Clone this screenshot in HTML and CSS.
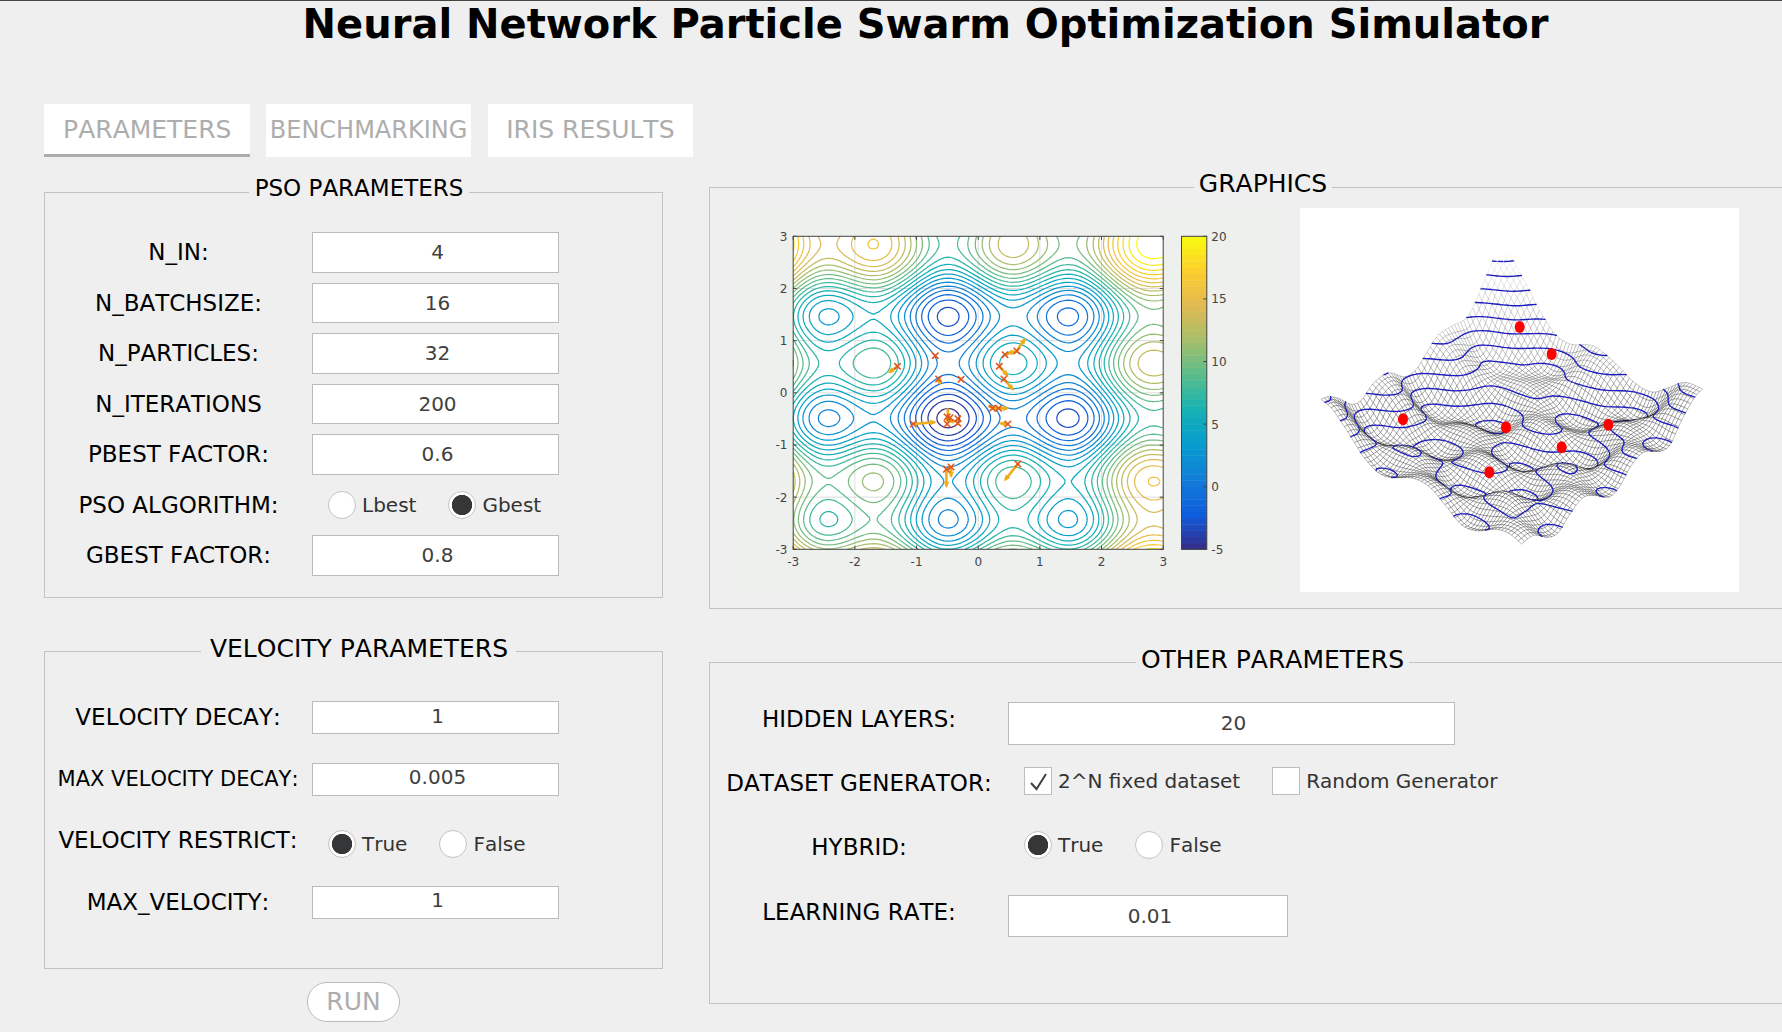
FILE: index.html
```html
<!DOCTYPE html>
<html lang="en">
<head>
<meta charset="utf-8">
<title>Neural Network Particle Swarm Optimization Simulator</title>
<link rel="stylesheet" href="styles.css">
</head>
<body>
<h1 class="title">Neural Network Particle Swarm Optimization Simulator</h1>
<div class="columns">
  <div class="left">
    <nav class="tabs">
      <button class="tab tab-active">PARAMETERS</button>
      <button class="tab tab-small">BENCHMARKING</button>
      <button class="tab">IRIS RESULTS</button>
    </nav>
    <section class="panel pso">
      <h2 class="legend legend-pso">PSO PARAMETERS</h2>
      <div class="rows">
        <div class="row"><label class="label">N_IN:</label><div class="field">4</div></div>
        <div class="row"><label class="label">N_BATCHSIZE:</label><div class="field">16</div></div>
        <div class="row"><label class="label">N_PARTICLES:</label><div class="field">32</div></div>
        <div class="row"><label class="label">N_ITERATIONS</label><div class="field">200</div></div>
        <div class="row"><label class="label">PBEST FACTOR:</label><div class="field">0.6</div></div>
        <div class="row"><label class="label">PSO ALGORITHM:</label><div class="options"><span class="radio"></span><span class="option">Lbest</span><span class="radio radio-on"></span><span class="option">Gbest</span></div></div>
        <div class="row"><label class="label">GBEST FACTOR:</label><div class="field">0.8</div></div>
      </div>
    </section>
    <section class="panel velocity">
      <h2 class="legend legend-velocity">VELOCITY PARAMETERS</h2>
      <div class="rows">
        <div class="row"><label class="label">VELOCITY DECAY:</label><div class="field">1</div></div>
        <div class="row"><label class="label label-tight">MAX VELOCITY DECAY:</label><div class="field">0.005</div></div>
        <div class="row"><label class="label">VELOCITY RESTRICT:</label><div class="options"><span class="radio radio-on"></span><span class="option">True</span><span class="radio"></span><span class="option">False</span></div></div>
        <div class="row"><label class="label">MAX_VELOCITY:</label><div class="field">1</div></div>
      </div>
    </section>
    <button class="run">RUN</button>
  </div>
  <div class="right">
    <section class="panel graphics">
      <h2 class="legend legend-graphics">GRAPHICS</h2>
      <div class="plots">
        <svg class="contour" id="contour" viewBox="730 208 548 384" width="548" height="384"></svg>
        <svg class="surface" id="surface" viewBox="60 54 1317 1152" width="439" height="384"></svg>
      </div>
    </section>
    <section class="panel other">
      <h2 class="legend legend-other">OTHER PARAMETERS</h2>
      <div class="rows">
        <div class="row"><label class="label">HIDDEN LAYERS:</label><div class="field field-wide">20</div></div>
        <div class="row"><label class="label">DATASET GENERATOR:</label><div class="options options-up"><span class="check"><svg width="26" height="26" viewBox="0 0 26 26"><path class="tick" d="M6 15 L11.5 21 L21 6"/></svg></span><span class="option">2^N fixed dataset</span><span class="check"></span><span class="option">Random Generator</span></div></div>
        <div class="row"><label class="label">HYBRID:</label><div class="options options-up"><span class="radio radio-on"></span><span class="option">True</span><span class="radio"></span><span class="option">False</span></div></div>
        <div class="row"><label class="label">LEARNING RATE:</label><div class="field field-rate">0.01</div></div>
      </div>
    </section>
  </div>
</div>
<script src="plots.js"></script>
</body>
</html>
```
FILE: styles.css
```css
* { box-sizing: border-box; }
body {
  margin: 0;
  width: 1782px;
  height: 1032px;
  overflow: hidden;
  background: #efefef;
  border-top: 1px solid #444;
  font-family: "DejaVu Sans", sans-serif;
  font-kerning: none;
  color: #000;
}
h1, h2 { margin: 0; }
button { font-family: inherit; font-kerning: none; padding: 0; }
.title {
  height: 103px;
  padding-left: 69px;
  text-align: center;
  font-size: 40px;
  line-height: 47px;
  font-kerning: normal;
  white-space: nowrap;
}
.columns { display: flex; gap: 46px; padding-left: 44px; }
.left { width: 619px; flex: none; }
.right { width: 1120px; flex: none; padding-top: 83px; }
.tabs { display: flex; gap: 16.3px; width: 660px; height: 53px; margin-bottom: 35px; }
.tab {
  width: 205.5px;
  height: 53px;
  border: 0;
  background: #fff;
  color: #adadad;
  font-size: 25px;
  white-space: nowrap;
  padding-bottom: 2px;
}
.tab-active { border-bottom: 3px solid #adadad; padding: 1px 0 0 1px; }
.tab-small { font-size: 24px; }
.panel { border: 1px solid #c3c3c3; display: flex; flex-direction: column; }
.legend {
  height: 30px;
  line-height: 30px;
  background: #efefef;
  font-weight: 400;
  font-size: 25px;
  text-align: center;
  white-space: nowrap;
  flex: none;
}
.pso { height: 406px; }
.legend-pso { width: 220px; margin: -20px 0 29px 204px; font-size: 23px; }
.velocity { height: 318px; margin-top: 53px; }
.legend-velocity { width: 315px; margin: -18px 0 37px 156px; padding-left: 1px; }
.rows { display: flex; flex-direction: column; }
.pso .rows { gap: 10px; }
.pso .row { height: 40.5px; }
.velocity .rows { gap: 29.6px; }
.velocity .row { height: 32px; }
.row { display: grid; grid-template-columns: 267px auto; align-items: center; }
.label { font-size: 23px; line-height: 28px; text-align: center; white-space: nowrap; }
.label-tight { font-size: 21px; }
.field {
  width: 247px;
  height: 100%;
  display: flex;
  align-items: center;
  justify-content: center;
  padding-left: 4px;
  background: #fff;
  border: 1px solid #bbb;
  font-size: 20px;
  color: #404040;
}
.velocity .field { padding-bottom: 4px; }
.options { display: flex; align-items: center; padding-left: 16px; }
.velocity .label, .velocity .options { align-self: start; }
.velocity .label { line-height: 33px; padding-right: 1px; }
.velocity .options { padding-top: 6px; }
.radio, .check { width: 28px; height: 28px; flex: none; background: #fff; border: 1px solid #bdbdbd; }
.radio { border-radius: 50%; border-color: #c4c4c4; }
.radio-on { background: radial-gradient(circle, #353637 0 9.8px, #fff 10.5px); }
.check svg { display: block; }
.tick { fill: none; stroke: #404040; stroke-width: 2; }
.option { font-size: 20px; line-height: 26px; color: #333; margin: 0 32px 0 6px; white-space: nowrap; }
.run {
  display: block;
  width: 93px;
  height: 40px;
  margin: 13px 0 0 263px;
  padding-bottom: 2px;
  border: 1px solid #bbb;
  border-radius: 20px;
  background: #fff;
  color: #adadad;
  font-size: 25px;
}
.graphics { height: 422px; }
.legend-graphics { width: 138px; margin: -19px 0 9px 484px; line-height: 30px; }
.plots { display: flex; gap: 22px; padding-left: 20px; }
.contour { background: #eef0ed; flex: none; }
.surface { background: #fff; flex: none; }
.other { height: 342px; margin-top: 53px; }
.legend-other { width: 273px; margin: -18px 0 24px 426px; }
.other .rows { gap: 21.2px; }
.other .row { height: 43px; grid-template-columns: 298px auto; align-items: start; }
.other .label { padding-top: 6px; line-height: 28px; }
.other .field { margin-top: 3px; }
.other .field-wide { width: 447px; height: 43px; padding-bottom: 1px; }
.other .field-rate { width: 280px; height: 42px; }
.options-up { padding-top: 4px; }
.box { fill: #fff; }
.tick-text { font-size: 12px; fill: #444; }
.grid-line { stroke: #ddd; stroke-width: 1; }
.level { fill: none; stroke-width: 1.25; }
.frame { fill: none; stroke: #444; stroke-width: 1; }
.arrow { stroke: #edae1c; stroke-width: 2.6; fill: none; }
.arrow-head { fill: #edae1c; }
.mark { stroke: #e0561b; stroke-width: 1.6; fill: none; }
.level-3d { stroke: #1d1dc0; stroke-width: 4; stroke-linecap: round; fill: none; }
.dot { fill: #f00; }
```
FILE: plots.js
```js
const join = (a) => a.join("");

// Contour plot of f(x, y) = g(x) + g(y) on [-3, 3] x [-3, 3]
(function () {
  const X0 = 793.2, X1 = 1163.2, Y0 = 236.3, Y1 = 549.3;
  const sx = (x) => X0 + (x + 3) / 6 * (X1 - X0);
  const sy = (y) => Y1 - (y + 3) / 6 * (Y1 - Y0);
  const g = (t) => t * t + 3 * Math.sin(3 * t);
  const stops = [[53,42,135],[15,92,221],[18,125,216],[7,156,207],[21,177,180],[89,189,140],[165,190,107],[225,185,82],[252,206,46],[249,251,14]];
  const colour = (t) => {
    const p = Math.max(0, Math.min(0.9999, t)) * 9, i = Math.floor(p), r = p - i;
    return "rgb(" + stops[i].map((c, k) => Math.round(c + (stops[i + 1][k] - c) * r)).join(",") + ")";
  };
  const out = [`<rect class="box" x="${X0}" y="${Y0}" width="${X1 - X0}" height="${Y1 - Y0}"/>`];
  for (let i = -2; i <= 2; i++) {
    out.push(`<path class="grid-line" d="M${sx(i)} ${Y0}V${Y1}M${X0} ${sy(i)}H${X1}"/>`);
  }
  const n = 110, step = 6 / n;
  for (let level = -5; level <= 20; level++) {
    let d = "";
    for (let i = 0; i < n; i++) for (let j = 0; j < n; j++) {
      const x = -3 + i * step, y = -3 + j * step;
      const c = [[x, y], [x + step, y], [x + step, y + step], [x, y + step]];
      const v = c.map((p) => g(p[0]) + g(p[1]) - level);
      const hit = [];
      for (let k = 0; k < 4; k++) {
        const m = (k + 1) % 4;
        if ((v[k] < 0) !== (v[m] < 0)) {
          const r = v[k] / (v[k] - v[m]);
          hit.push(sx(c[k][0] + (c[m][0] - c[k][0]) * r).toFixed(1) + " " + sy(c[k][1] + (c[m][1] - c[k][1]) * r).toFixed(1));
        }
      }
      for (let k = 0; k + 1 < hit.length; k += 2) d += "M" + hit[k] + "L" + hit[k + 1];
    }
    out.push(`<path class="level" stroke="${colour((level + 5) / 25)}" d="${d}"/>`);
  }
  out.push(`<rect class="frame" x="${X0}" y="${Y0}" width="${X1 - X0}" height="${Y1 - Y0}"/>`);
  for (let i = -3; i <= 3; i++) {
    out.push(`<path class="frame" d="M${sx(i)} ${Y1}v-3.5M${sx(i)} ${Y0}v3.5M${X0} ${sy(i)}h3.5M${X1} ${sy(i)}h-3.5"/>`);
    out.push(`<text class="tick-text" text-anchor="middle" x="${sx(i)}" y="566">${i}</text>`);
    out.push(`<text class="tick-text" text-anchor="end" x="787.5" y="${sy(i) + 4.5}">${i}</text>`);
  }
  const bands = 50, bh = (Y1 - Y0) / bands;
  for (let i = 0; i < bands; i++) {
    out.push(`<rect x="1181.5" width="25.3" y="${Y1 - (i + 1) * bh}" height="${bh + 0.4}" fill="${colour((i + 0.5) / bands)}"/>`);
  }
  out.push(`<rect class="frame" x="1181.5" y="${Y0}" width="25.3" height="${Y1 - Y0}"/>`);
  for (let v = -5; v <= 20; v += 5) {
    const y = Y1 - (v + 5) / 25 * (Y1 - Y0);
    out.push(`<path class="frame" d="M1206.8 ${y}h-3.5"/><text class="tick-text" x="1211.3" y="${y + 4.5}">${v}</text>`);
  }
  const px = (x) => 700 + x / 2.8, py = (y) => 160 + y / 3;
  const arrows = [[553,619,526,640],[668,657,673,677],[887,573,912,533],[854,584,887,573],[838,619,864,650],[851,657,879,692],[807,739,836,747],[819,745,866,745],[862,792,836,790],[597,792,663,786],[694,745,694,792],[690,928,690,985],[703,921,703,955],[890,912,851,964],[722,783,692,783],[731,658,724,650]];
  for (const a of arrows) {
    const x1 = px(a[0]), y1 = py(a[1]), x2 = px(a[2]), y2 = py(a[3]);
    const l = Math.hypot(x2 - x1, y2 - y1), ux = (x2 - x1) / l, uy = (y2 - y1) / l;
    out.push(`<path class="arrow" d="M${x1} ${y1}L${x2 - ux * 2} ${y2 - uy * 2}"/>`);
    if (l > 6) out.push(`<path class="arrow-head" d="M${x2} ${y2}L${x2 - ux * 6.5 - uy * 2.8} ${y2 - uy * 6.5 + ux * 2.8}L${x2 - ux * 6.5 + uy * 2.8} ${y2 - uy * 6.5 - ux * 2.8}Z"/>`);
  }
  const marks = [[553,619],[659,587],[668,657],[731,658],[854,584],[887,573],[838,619],[851,657],[819,745],[836,745],[862,792],[597,792],[692,771],[700,773],[722,776],[692,792],[722,790],[690,928],[703,921],[890,912]];
  for (const m of marks) {
    out.push(`<path class="mark" d="M${px(m[0]) - 3.2} ${py(m[1]) - 3.2}l6.4 6.4m0 -6.4l-6.4 6.4"/>`);
  }
  document.getElementById("contour").innerHTML = join(out);
})();

// Wireframe surface, spanned between its four edge profiles
(function () {
  const spline = (pts) => (x) => {
    let i = 0;
    while (i < pts.length - 2 && x > pts[i + 1][0]) i++;
    const slope = (k) => {
      const a = pts[Math.max(0, k - 1)], b = pts[Math.min(pts.length - 1, k + 1)];
      return (b[1] - a[1]) / (b[0] - a[0]);
    };
    const p = pts[i], q = pts[i + 1], h = q[0] - p[0], t = (x - p[0]) / h;
    return (2*t*t*t - 3*t*t + 1) * p[1] + (t*t*t - 2*t*t + t) * h * slope(i)
      + (3*t*t - 2*t*t*t) * q[1] + (t*t*t - t*t) * h * slope(i + 1);
  };
  const B = [669, 150], L = [123, 628], R = [1268, 597], F = [725, 1062];
  const BL = spline([L, [145,620], [175,625], [215,643], [245,630], [280,580], [325,549], [375,560], [409,538], [440,488], [472,438], [515,408], [558,385], [586,338], [603,295], [620,255], [638,211], B]);
  const BR = spline([B, [700,211], [725,258], [748,299], [768,342], [793,385], [828,435], [870,462], [940,468], [1007,520], [1060,575], [1115,606], [1160,595], [1215,577], R]);
  const LF = spline([L, [155,655], [192,708], [220,752], [250,800], [295,848], [330,862], [400,865], [450,892], [497,947], [545,1005], [590,1022], [650,1018], [690,1032], F]);
  const FR = spline([F, [760,1036], [805,1042], [835,1028], [870,972], [910,922], [950,917], [990,920], [1022,885], [1050,832], [1090,787], [1145,783], [1172,762], [1200,700], [1245,620], R]);
  // u runs from back to left, v from back to right
  const mix = (a, b, t) => a + (b - a) * t;
  const wave = (u, v) => 33 * Math.cos(2 * Math.PI * (u - 0.83) / 0.31) * Math.cos(2 * Math.PI * (v - 0.53) / 0.45);
  const point = (u, v) => {
    const xu0 = mix(B[0], L[0], u), xu1 = mix(R[0], F[0], u);
    const xv0 = mix(B[0], R[0], v), xv1 = mix(L[0], F[0], v);
    const x = mix(xu0, xu1, v);
    const span = (u0, u1, v0, v1, c) => mix(u0, u1, v) + mix(v0, v1, u)
      - mix(mix(c[0], c[1], u), mix(c[2], c[3], u), v);
    const y = span(BL(xu0), FR(xu1), BR(xv0), LF(xv1), [B[1], L[1], R[1], F[1]])
      + wave(u, v)
      - span(wave(u, 0), wave(u, 1), wave(0, v), wave(1, v), [wave(0, 0), wave(1, 0), wave(0, 1), wave(1, 1)]);
    const z = (mix(mix(200, 425, u), mix(438, 688, u), v) - y) / 34.5;
    return [x, y, z];
  };
  const n = 60, grid = [];
  for (let i = 0; i <= n; i++) {
    grid.push([]);
    for (let j = 0; j <= n; j++) grid[i].push(point(i / n, j / n));
  }
  const out = [];
  for (let s = 0; s <= 2 * n - 2; s++) for (let i = Math.max(0, s - n + 1); i <= Math.min(n - 1, s); i++) {
    const j = s - i;
    const c = [grid[i][j], grid[i + 1][j], grid[i + 1][j + 1], grid[i][j + 1]];
    const mean = (c[0][1] + c[2][1]) / 2;
    if (mean < 205) continue;
    const alpha = Math.min(0.55, 0.06 + (mean - 200) / 900).toFixed(2);
    out.push(`<polygon points="${c.map((p) => p[0].toFixed(1) + "," + p[1].toFixed(1)).join(" ")}" fill="#fff" stroke="#000" stroke-opacity="${alpha}" stroke-width="1.4"/>`);
    const lo = Math.ceil(Math.min(...c.map((p) => p[2]))), hi = Math.floor(Math.max(...c.map((p) => p[2])));
    for (let level = lo; level <= hi; level++) {
      const hit = [];
      for (let k = 0; k < 4; k++) {
        const a = c[k], b = c[(k + 1) % 4];
        if ((a[2] < level) !== (b[2] < level)) {
          const r = (level - a[2]) / (b[2] - a[2]);
          hit.push(mix(a[0], b[0], r).toFixed(1) + " " + mix(a[1], b[1], r).toFixed(1));
        }
      }
      if (hit.length > 1) out.push(`<path class="level-3d" d="M${hit[0]}L${hit[1]}"/>`);
    }
  }
  for (const d of [[719,411],[815,492],[369,688],[678,712],[985,704],[845,772],[628,847]]) {
    out.push(`<ellipse class="dot" cx="${d[0]}" cy="${d[1]}" rx="15" ry="18"/>`);
  }
  document.getElementById("surface").innerHTML = join(out);
})();
```
